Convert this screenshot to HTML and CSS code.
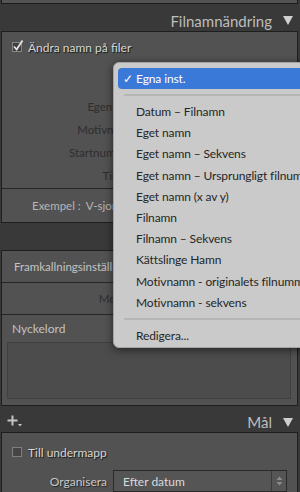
FILE: index.html
```html
<!DOCTYPE html>
<html lang="sv">

<head>
    <meta charset="UTF-8">
    <title>Filnamnändring</title>
    <link rel="stylesheet" href="styles.css">
</head>

<body>
    <div class="stub"></div>

    <div class="head">
        <span class="head-title">Filnamnändring</span>
        <span class="tri"></span>
    </div>

    <div class="panel rename">
        <label class="check-row">
            <span class="box">
                <svg width="12" height="13" viewBox="0 0 12 13"><path d="M2 7.5 L4.6 10.5 L10.5 1.5" fill="none" stroke="#e2e2e2" stroke-width="1.8"/></svg>
            </span>
            Ändra namn på filer
        </label>
        <div class="fields">
            <div class="field"><span class="field-label"></span></div>
            <div class="field"><span class="field-label">Egen text:</span></div>
            <div class="field"><span class="field-label">Motivnamn:</span></div>
            <div class="field"><span class="field-label">Startnummer:</span></div>
            <div class="field"><span class="field-label">Tillägg:</span></div>
        </div>
        <div class="example">
            <span class="example-label">Exempel :</span>
            <span>V-sjon-001.dng</span>
        </div>
    </div>

    <div class="head"></div>

    <div class="panel apply">
        <div class="apply-row">Framkallningsinställningar</div>
        <div class="apply-row meta"><span class="meta-label">Metadata</span></div>
        <div class="keywords">
            <div class="kw-label">Nyckelord</div>
            <div class="kw-box"></div>
        </div>
    </div>

    <div class="head head-dest">
        <svg class="plus" width="16" height="12" viewBox="0 0 16 12">
            <path d="M5.5 0.5 V10.5 M0.5 5.5 H10.5" stroke="#c4c4c4" stroke-width="2"/>
            <path d="M11 9 H15 L13 11.5 Z" fill="#c4c4c4"/>
        </svg>
        <span class="head-title">Mål</span>
        <span class="tri"></span>
    </div>

    <div class="panel dest">
        <label class="check-row sub">
            <span class="box empty"></span>
            Till undermapp
        </label>
        <div class="org-row">
            <span class="org-label">Organisera</span>
            <div class="select">
                <span class="select-text">Efter datum</span>
                <span class="stepper">
                    <svg width="7" height="10" viewBox="0 0 7 10"><path d="M3.5 0.5 L6.5 4 H0.5 Z M3.5 9.5 L6.5 6 H0.5 Z" fill="#8c8c8c"/></svg>
                </span>
            </div>
        </div>
    </div>

    <ul class="menu">
        <li class="menu-sel"><span class="tick">✓</span>Egna inst.</li>
        <li class="menu-sep"></li>
        <li>Datum – Filnamn</li>
        <li>Eget namn</li>
        <li>Eget namn – Sekvens</li>
        <li>Eget namn – Ursprungligt filnummer</li>
        <li>Eget namn (x av y)</li>
        <li>Filnamn</li>
        <li>Filnamn – Sekvens</li>
        <li>Kättslinge Hamn</li>
        <li>Motivnamn - originalets filnummer</li>
        <li>Motivnamn - sekvens</li>
        <li class="menu-sep"></li>
        <li>Redigera...</li>
    </ul>
</body>

</html>
```

FILE: styles.css
```css
* {
    margin: 0;
    padding: 0;
    box-sizing: border-box;
    list-style: none;
}

body {
    position: relative;
    width: 300px;
    height: 492px;
    overflow: hidden;
    background: #393939;
    font-family: Lato, "Open Sans", sans-serif;
    font-size: 11.5px;
    color: #d2d2d2;
}

.stub {
    height: 4px;
    margin: 0 2px 0 1px;
    background: #535353;
    border: 1px solid #1c1c1c;
    border-top: 0;
}

.head {
    height: 27px;
    display: flex;
    align-items: center;
    justify-content: flex-end;
    gap: 11px;
    padding: 6px 7px 0 7px;
}

.head-title {
    font-size: 15px;
    color: #bdbdbd;
}

.tri {
    width: 0;
    height: 0;
    border-left: 5px solid transparent;
    border-right: 5px solid transparent;
    border-top: 9px solid #cfcfcf;
}

.panel {
    margin: 0 2px 0 1px;
    background: #525252;
    border: 1px solid #1e1e1e;
}

.check-row {
    height: 30px;
    display: flex;
    align-items: center;
    gap: 6px;
    padding-left: 10px;
    font-size: 12px;
    color: #d6d6d6;
    text-shadow: 1px 1px 1px rgba(0, 0, 0, .75);
}

.box {
    position: relative;
    width: 10px;
    height: 10px;
    background: #3e3e3e;
    border: 1px solid #858585;
}

.box svg {
    position: absolute;
    left: -1px;
    top: -4px;
}

.fields {
    height: 126px;
    padding-top: 10px;
}

.field {
    height: 23px;
    display: flex;
    align-items: center;
}

.field-label {
    width: 136px;
    text-align: right;
    color: #2e2e2e;
}

.example {
    height: 34px;
    display: flex;
    align-items: center;
    gap: 5px;
    padding-left: 30px;
    border-top: 1px solid #262626;
    color: #b6b6b6;
}

.apply-row {
    height: 32px;
    display: flex;
    align-items: center;
    padding-left: 12px;
    border-bottom: 1px solid #262626;
    color: #c4c4c4;
}

.meta-label {
    width: 145px;
    text-align: right;
    color: #2e2e2e;
}

.meta {
    padding-left: 0;
}

.keywords {
    height: 90px;
    padding: 7px 6px 0 5px;
}

.kw-label {
    height: 14px;
    line-height: 14px;
    padding-left: 5px;
    margin-bottom: 6px;
    font-size: 12px;
    color: #c2c2c2;
}

.kw-box {
    height: 57px;
    background: #4c4c4c;
    border: 1px solid #404040;
}

.head-dest {
    height: 26px;
    gap: 11px;
}

.plus {
    margin-right: auto;
    margin-top: -2px;
}

.check-row.sub {
    margin-top: 4px;
}

.box.empty {
    background: #454545;
    border-color: #7e7e7e;
}

.org-row {
    display: flex;
    align-items: center;
    gap: 6px;
    margin-top: 3px;
}

.org-label {
    width: 105px;
    text-align: right;
    font-size: 12px;
    color: #c8c8c8;
    text-shadow: 1px 1px 1px rgba(0, 0, 0, .6);
}

.select {
    width: 174px;
    height: 22px;
    display: flex;
    align-items: center;
    background: #555;
    border: 1px solid #2a2a2a;
}

.select-text {
    flex: 1;
    padding-left: 9px;
    font-size: 12px;
    color: #dadada;
}

.stepper {
    width: 15px;
    height: 100%;
    display: flex;
    align-items: center;
    justify-content: center;
    border-left: 1px solid #3a3a3a;
}

.menu {
    position: absolute;
    left: 113px;
    top: 62px;
    width: 200px;
    height: 286px;
    padding: 5px 0 0 4px;
    background: #cacaca;
    border: 1px solid #a4a4a4;
    border-radius: 6px;
    box-shadow: 0 2px 8px rgba(0, 0, 0, .55);
    color: #262626;
    font-size: 12px;
    letter-spacing: -0.12px;
    white-space: nowrap;
    overflow: hidden;
}

.menu li {
    height: 21.2px;
    line-height: 21.2px;
    padding-left: 18px;
}

.menu li.menu-sel {
    height: 21px;
    line-height: 21px;
    padding-left: 5px;
    background: #3a79d7;
    border-radius: 4px;
    color: #fff;
}

.tick {
    display: inline-block;
    width: 13px;
}

.menu li.menu-sep {
    height: 2px;
    margin: 5px 0 5px 6px;
    padding: 0;
    background: #b6b6b6;
}
```
